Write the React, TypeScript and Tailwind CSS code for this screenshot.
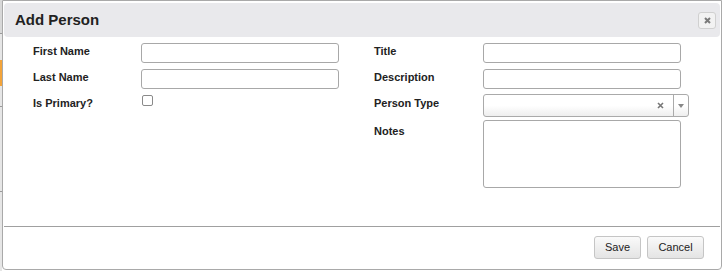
import React from 'react';

const label = 'text-[11px] leading-[13px] font-bold text-[#222]';
const field = 'h-[20px] w-[198px] rounded-[3px] border border-[#a8a8a8] bg-white';

export default function App() {
  return (
    <div className="flex h-[271px] w-[722px] bg-white font-['Liberation_Sans',Arial,sans-serif] overflow-hidden">
      {/* page behind the dialog */}
      <div className="flex w-[2px] flex-col">
        <div className="h-[33px] bg-[#d8d8d8]" />
        <div className="h-[1px] bg-[#9a9a9a]" />
        <div className="h-[26px] bg-[#e6e6e6]" />
        <div className="h-[26px] bg-[#f3a43a]" />
        <div className="h-[20px] bg-[#e6e6e6]" />
        <div className="h-[1px] bg-[#9a9a9a]" />
        <div className="h-[84px] bg-[#e6e6e6]" />
        <div className="h-[1px] bg-[#9a9a9a]" />
        <div className="flex-1 bg-[#e6e6e6]" />
      </div>

      <div className="flex h-[270px] w-[720px] flex-col rounded-b-[4px] border border-[#a9a9a9] px-[1px] pt-[2px]">
        <div className="flex h-[34px] items-center justify-between rounded-[4px] bg-[#e9e9ec] pl-[11px] pr-[4px]">
          <span className="text-[15px] font-bold text-[#222]">Add Person</span>
          <button className="flex h-[17px] w-[18px] items-center justify-center rounded-[3px] border border-[#d0d0d0] bg-[#f2f2f2]">
            <svg width="7" height="7" viewBox="0 0 7 7">
              <path d="M1 1 L6 6 M6 1 L1 6" stroke="#7a7a7a" strokeWidth="2" />
            </svg>
          </button>
        </div>

        <div className="mt-[6px] grid grid-cols-[108px_233px_109px_206px] grid-rows-[26px_25px_26px_auto] items-start pl-[29px]">
          <div className={`${label} pt-[2px]`}>First Name</div>
          <div className={field} />
          <div className={`${label} pt-[2px]`}>Title</div>
          <div className={field} />

          <div className={`${label} pt-[2px]`}>Last Name</div>
          <div className={field} />
          <div className={`${label} pt-[2px]`}>Description</div>
          <div className={field} />

          <div className={`${label} pt-[3px]`}>Is Primary?</div>
          <div className="ml-[1px] mt-[1px] h-[11px] w-[11px] rounded-[2px] border border-[#8a8a8a] bg-white" />
          <div className={`${label} pt-[3px]`}>Person Type</div>
          <div className="flex h-[23px] w-[206px] items-center rounded-[3px] border border-[#aaaaaa] bg-gradient-to-b from-white from-50% to-[#eeeeee]">
            <div className="flex flex-1 items-center justify-end pr-[9px]">
              <svg width="7" height="7" viewBox="0 0 7 7">
                <path d="M1 1 L6 6 M6 1 L1 6" stroke="#777" strokeWidth="1.6" />
              </svg>
            </div>
            <div className="flex h-full w-[15px] items-center justify-center border-l border-[#aaaaaa]">
              <svg width="6" height="4" viewBox="0 0 6 4">
                <path d="M0 0 L6 0 L3 4 Z" fill="#888" />
              </svg>
            </div>
          </div>

          <div />
          <div />
          <div className={`${label} pt-[5px]`}>Notes</div>
          <div className="h-[68px] w-[198px] rounded-[3px] border border-[#a8a8a8] bg-white" />
        </div>

        <div className="mt-auto flex justify-end gap-[6px] border-t border-[#a0a0a0] pb-[10px] pr-[16px] pt-[9px]">
          <button className="h-[23px] w-[47px] rounded-[3px] border border-[#c5c5c5] bg-gradient-to-b from-[#fafafa] to-[#e4e4e4] text-[11px] text-[#222]">
            Save
          </button>
          <button className="h-[23px] w-[57px] rounded-[3px] border border-[#c5c5c5] bg-gradient-to-b from-[#fafafa] to-[#e4e4e4] text-[11px] text-[#222]">
            Cancel
          </button>
        </div>
      </div>
    </div>
  );
}
